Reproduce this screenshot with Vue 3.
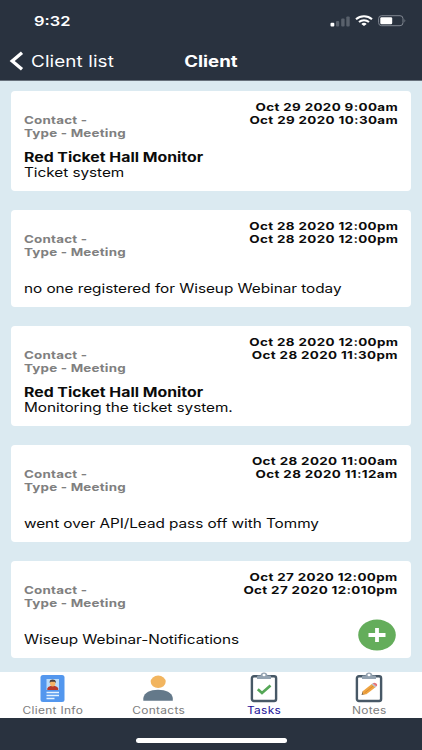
<template>
  <div class="screen">
    <header class="header">
      <div class="status-bar">
        <div class="clock"><span class="wide">9:32</span></div>
        <div class="indicators">
          <svg class="signal" width="20" height="11" viewBox="0 0 20 11">
            <rect x="0.5" y="6.8" width="3.8" height="3.8" rx="1" fill="#fff" />
            <rect x="6" y="5" width="3.2" height="5.6" rx="1" fill="#59616c" />
            <rect x="11.2" y="2.6" width="3.4" height="8" rx="1" fill="#59616c" />
            <rect x="16.3" y="0.4" width="3.4" height="10.2" rx="1" fill="#59616c" />
          </svg>
          <svg class="wifi" width="18" height="12" viewBox="0 0 18 12" fill="none" stroke="#fff" stroke-width="2">
            <path d="M1 4.2C5.5 0.1 12.5 0.1 17 4.2" />
            <path d="M4 7C6.8 4.5 11.2 4.5 14 7" />
            <path d="M6.3 8.9C7.8 7.5 10.2 7.5 11.7 8.9L9 11Z" fill="#fff" stroke="none" />
          </svg>
          <svg class="battery" width="29" height="12" viewBox="0 0 29 12">
            <rect x="0.6" y="0.7" width="24.4" height="10" rx="3" fill="none" stroke="#808791" />
            <rect x="2.3" y="2.2" width="11.9" height="7" rx="1.2" fill="#fff" />
            <path d="M26.5 4V7.6Q28.3 5.8 26.5 4Z" fill="#808791" />
          </svg>
        </div>
      </div>
      <nav class="nav-bar">
        <button class="back-btn">
          <svg width="15" height="20" viewBox="0 0 15 20">
            <path d="M13 1.8L3.2 10L13 18.2" fill="none" stroke="#fff" stroke-width="3.3" />
          </svg>
          <span class="wide">Client list</span>
        </button>
        <h1 class="title"><span class="wide">Client</span></h1>
      </nav>
    </header>

    <main class="list">
      <article v-for="task in tasks" :key="task.id" class="card">
        <div class="card-top">
          <div class="meta">
            <div class="wide">Contact -</div>
            <div class="wide">Type - Meeting</div>
          </div>
          <div class="times">
            <div class="wide">{{ task.start }}</div>
            <div class="wide">{{ task.end }}</div>
          </div>
        </div>
        <div class="subject"><span v-if="task.subject" class="wide">{{ task.subject }}</span></div>
        <div class="body"><span class="wide">{{ task.body }}</span></div>
      </article>
    </main>

    <button class="add-btn" aria-label="Add task">
      <svg width="38" height="32" viewBox="0 0 38 32">
        <ellipse cx="19" cy="16" rx="18.8" ry="15.5" fill="#64ad5b" />
        <path d="M10.5 16H27.5M19 9V23" stroke="#fff" stroke-width="3.8" />
      </svg>
    </button>

    <footer class="tab-bar">
      <button
        v-for="tab in tabs"
        :key="tab"
        class="tab"
        :class="{ active: tab === activeTab }"
        @click="activeTab = tab"
      >
        <svg v-if="tab === 'Client Info'" class="icon" width="30" height="32" viewBox="0 0 30 32">
          <rect x="2.5" y="3" width="24" height="27" rx="2.5" fill="#5397ee" />
          <rect x="8.5" y="7" width="12.5" height="11" fill="#b9dcfb" />
          <path d="M9.3 18V16.5Q9.6 14.5 12.5 14H17Q20 14.5 20.2 16.5V18Z" fill="#b8392b" />
          <ellipse cx="14.7" cy="11.3" rx="2.7" ry="3.3" fill="#f4b366" />
          <path d="M11.7 11V9.5Q11.8 7.5 14.7 7.5T17.8 9.5V11L16.7 9.7H12.7Z" fill="#493d3b" />
          <path d="M8.5 20.5H21M8.5 23.5H21M8.5 26.5H16.5" stroke="#e4f2ff" stroke-width="1.3" />
        </svg>
        <svg v-else-if="tab === 'Contacts'" class="icon" width="30" height="32" viewBox="0 0 30 32">
          <ellipse cx="15.2" cy="9.8" rx="7.5" ry="6.2" fill="#f2b55f" />
          <path d="M0.3 28.8V26C1.5 20.5 7 17.8 15 17.8S28.800 20.5 29.8 26V28.8Z" fill="#64798a" />
        </svg>
        <svg v-else class="icon" width="30" height="32" viewBox="0 0 30 32">
          <rect x="2.9" y="4.2" width="24.2" height="24.8" rx="2" fill="#fff" stroke="#475866" stroke-width="2.4" />
          <path
            d="M8 7V4.5Q8 3.5 9.2 3.5H11.5Q12 0.5 15 0.5T18.5 3.5H20.8Q22 3.5 22 4.5V7Z"
            fill="#93a2b0"
          />
          <ellipse cx="15" cy="3" rx="1.5" ry="1.2" fill="#fff" />
          <path v-if="tab === 'Tasks'" d="M8.8 17.2L13 21L21.5 13.5" fill="none" stroke="#55a757" stroke-width="2.7" />
          <g v-else>
            <path d="M7.5 23L9 18.8L12.3 21.7Z" fill="#5b4a3e" />
            <path d="M8.7 19.3L17.8 12L21.5 15.2L12.4 22.3L8.7 22.5Z" fill="#eea443" />
            <path d="M10.5 21L19.7 13.6" stroke="#d98526" stroke-width="0.8" />
            <path d="M17.4 12.3L18.6 11.3L22.3 14.5L21.1 15.5Z" fill="#b8c0c9" />
            <path d="M18.6 11.3Q20.5 10.2 22.3 11.5T22.3 14.5Z" fill="#e37378" />
          </g>
        </svg>
        <span class="wide">{{ tab }}</span>
      </button>
    </footer>
    <div class="home-area"><div class="home-indicator"></div></div>
  </div>
</template>

<script setup>
import { ref } from 'vue'

const tabs = ['Client Info', 'Contacts', 'Tasks', 'Notes']
const activeTab = ref('Tasks')

const tasks = [
  {
    id: 1,
    start: 'Oct 29 2020 9:00am',
    end: 'Oct 29 2020 10:30am',
    subject: 'Red Ticket Hall Monitor',
    body: 'Ticket system'
  },
  {
    id: 2,
    start: 'Oct 28 2020 12:00pm',
    end: 'Oct 28 2020 12:00pm',
    subject: '',
    body: 'no one registered for Wiseup Webinar today'
  },
  {
    id: 3,
    start: 'Oct 28 2020 12:00pm',
    end: 'Oct 28 2020 11:30pm',
    subject: 'Red Ticket Hall Monitor',
    body: 'Monitoring the ticket system.'
  },
  {
    id: 4,
    start: 'Oct 28 2020 11:00am',
    end: 'Oct 28 2020 11:12am',
    subject: '',
    body: 'went over API/Lead pass off with Tommy'
  },
  {
    id: 5,
    start: 'Oct 27 2020 12:00pm',
    end: 'Oct 27 2020 12:010pm',
    subject: '',
    body: 'Wiseup Webinar-Notifications'
  }
]
</script>

<style>
body {
  margin: 0;
}
</style>

<style scoped>
.screen {
  position: relative;
  width: 422px;
  height: 750px;
  display: flex;
  flex-direction: column;
  overflow: hidden;
  background: #dbeaf1;
  font-family: Inter, "Liberation Sans", sans-serif;
  color: #0b0b0b;
}

button {
  border: none;
  background: none;
  padding: 0;
  margin: 0;
  font-family: inherit;
}

.wide {
  display: block;
  width: max-content;
  white-space: nowrap;
  transform: scaleX(1.218);
  transform-origin: left center;
}

.header {
  height: 81px;
  box-sizing: border-box;
  flex-shrink: 0;
  background: #29323f;
  border-bottom: 1px solid #67717c;
  color: #fff;
}

.status-bar {
  height: 42px;
  box-sizing: border-box;
  padding: 0 15px 0 34px;
  display: flex;
  justify-content: space-between;
  align-items: center;
}

.clock {
  font-size: 13.5px;
  font-weight: 600;
}

.indicators {
  display: flex;
  align-items: center;
}

.wifi {
  margin-left: 5px;
}

.battery {
  margin-left: 5px;
}

.nav-bar {
  height: 38px;
  padding: 0 9px;
  display: grid;
  grid-template-columns: 1fr auto 1fr;
  align-items: center;
}

.back-btn {
  display: flex;
  align-items: center;
  gap: 7px;
  color: #fff;
  font-size: 15.5px;
  letter-spacing: 0.08px;
}

.title {
  margin: 0;
  font-size: 15.3px;
  font-weight: 700;
}

.title .wide {
  transform-origin: center;
}

.list {
  flex: 1;
  min-height: 0;
  padding: 9.5px 11px 0;
  display: flex;
  flex-direction: column;
  gap: 18.5px;
}

.card {
  box-sizing: border-box;
  flex-shrink: 0;
  padding: 10.5px 13px;
  background: #fff;
  border-radius: 4px;
}

.card-top {
  display: flex;
  justify-content: space-between;
  font-size: 11px;
  line-height: 13px;
  font-weight: 700;
}

.meta {
  padding-top: 13px;
  color: #808080;
  letter-spacing: 0.17px;
}

.times {
  letter-spacing: 0.3px;
}

.times .wide {
  margin-left: auto;
  transform-origin: right center;
}

.subject {
  min-height: 13px;
  margin-top: 8.5px;
  font-size: 13px;
  line-height: 16px;
  font-weight: 700;
}

.body {
  font-size: 12.6px;
  line-height: 16px;
  letter-spacing: -0.04px;
}

.add-btn {
  position: absolute;
  left: 358px;
  top: 619px;
  width: 38px;
  height: 32px;
}

.tab-bar {
  height: 46px;
  flex-shrink: 0;
  display: grid;
  grid-template-columns: repeat(4, 1fr);
  background: #fff;
}

.tab {
  display: flex;
  flex-direction: column;
  align-items: center;
  color: #7c7c7c;
  font-size: 9.8px;
  line-height: 14px;
  letter-spacing: 0.25px;
}

.tab .wide {
  transform-origin: center;
}

.tab.active {
  color: #1b1199;
}

.icon {
  display: block;
}

.home-area {
  height: 32px;
  flex-shrink: 0;
  box-sizing: border-box;
  display: flex;
  justify-content: center;
  align-items: flex-start;
  padding-top: 20px;
  background: #29323f;
}

.home-indicator {
  width: 151px;
  height: 4.5px;
  border-radius: 3px;
  background: #fff;
}
</style>
